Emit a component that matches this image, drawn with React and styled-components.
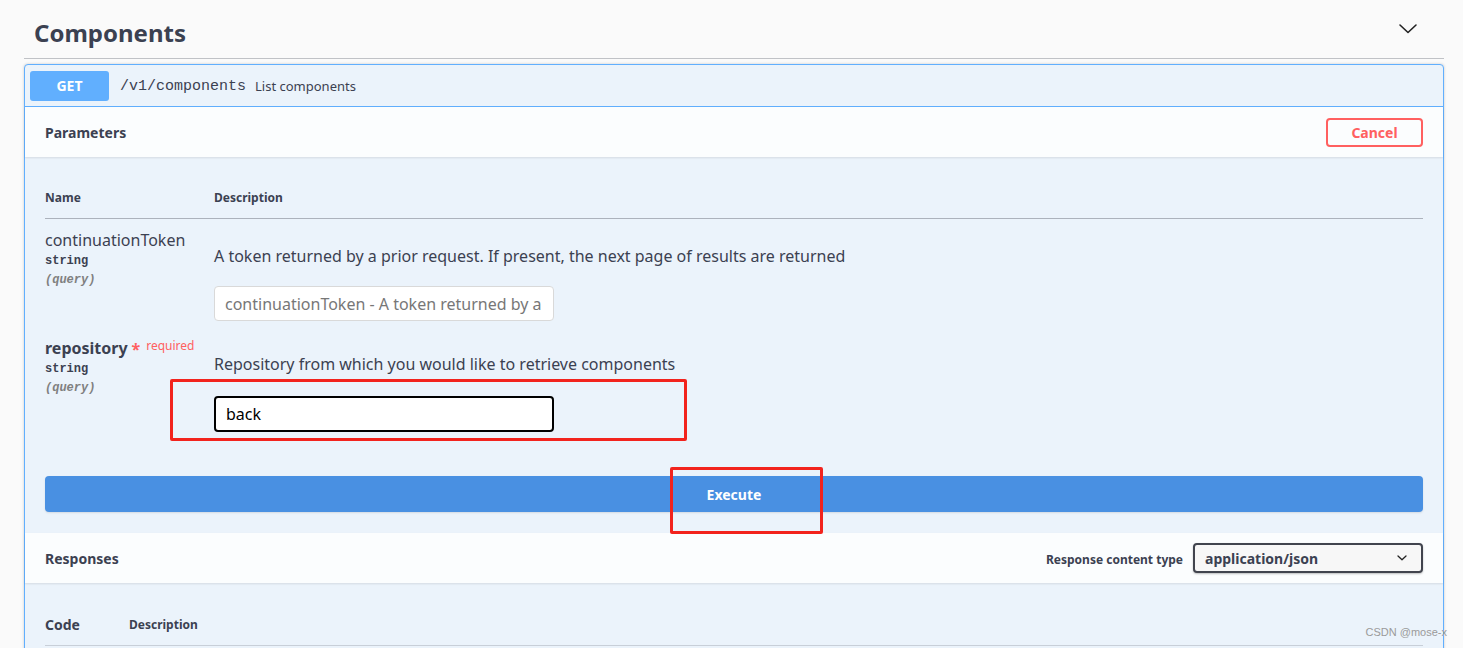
import React from 'react';
import styled, { createGlobalStyle } from 'styled-components';

const GlobalStyle = createGlobalStyle`
  html, body {
    margin: 0;
    padding: 0;
    background: #fafafa;
    font-family: "Noto Sans", "Open Sans", sans-serif;
    color: #3b4151;
    overflow: hidden;
  }
`;

const Page = styled.div`
  position: relative;
  padding: 0 19px 0 24px;
  height: 648px;
`;

const TagHeader = styled.div`
  height: 58px;
  display: flex;
  align-items: center;
  justify-content: space-between;
  padding: 0 26px 0 10px;
  border-bottom: 1px solid rgba(59, 65, 81, 0.3);
`;

const TagTitle = styled.h3`
  margin: 0;
  font-size: 24px;
  font-weight: 700;
  color: #3b4151;
  padding-top: 6px;
`;

const Opblock = styled.div`
  margin-top: 5px;
  border: 1px solid #61affe;
  border-radius: 4px;
  background: #ebf3fb;
  box-shadow: 0 0 3px rgba(0, 0, 0, 0.19);
`;

const Summary = styled.div`
  display: flex;
  align-items: center;
  height: 41px;
  padding: 0 5px;
  border-bottom: 1px solid #61affe;
`;

const Method = styled.span`
  width: 79px;
  height: 30px;
  display: flex;
  align-items: center;
  justify-content: center;
  background: #61affe;
  border-radius: 3px;
  color: #fff;
  font-size: 14px;
  font-weight: 700;
`;

const Path = styled.span`
  font-family: "Liberation Mono", monospace;
  font-size: 15px;
  color: #3b4151;
  margin-left: 11px;
  padding-top: 2px;
`;

const SummaryDesc = styled.span`
  font-size: 13px;
  color: #3b4151;
  margin-left: 9px;
`;

const SectionHeader = styled.div`
  height: 50px;
  display: flex;
  align-items: center;
  justify-content: space-between;
  padding: 0 20px;
  background: rgba(255, 255, 255, 0.8);
  box-shadow: 0 1px 2px rgba(0, 0, 0, 0.1);
`;

const SectionTitle = styled.h4`
  margin: 0;
  font-size: 14px;
  font-weight: 700;
  color: #3b4151;
`;

const CancelButton = styled.button`
  width: 97px;
  height: 29px;
  border: 2px solid #ff6060;
  border-radius: 4px;
  background: transparent;
  color: #ff6060;
  font-family: inherit;
  font-size: 14px;
  font-weight: 700;
`;

const TableWrap = styled.div`
  padding: 20px 20px 0;
`;

const Table = styled.table`
  width: 100%;
  border-collapse: collapse;
`;

const Th = styled.th`
  text-align: left;
  font-size: 12px;
  font-weight: 700;
  color: #3b4151;
  padding: 12px 0;
  height: 16px;
  width: ${(p) => (p.$w ? p.$w + 'px' : 'auto')};
  border-bottom: 1px solid rgba(59, 65, 81, 0.2);
`;

const Td = styled.td`
  vertical-align: top;
  padding: ${(p) => p.$pad || '10px 0 0'};
`;

const ParamName = styled.div`
  font-size: 16px;
  line-height: 22px;
  font-weight: ${(p) => (p.$required ? 700 : 400)};
  color: #3b4151;
  display: flex;
  align-items: flex-start;
`;

const Required = styled.span`
  color: #ff6060;
  font-size: 12px;
  font-weight: 400;
  margin-left: 4px;
  margin-top: -4px;
  span {
    font-size: 16px;
    font-weight: 700;
    position: relative;
    top: 5px;
    margin-right: 6px;
  }
`;

const ParamType = styled.div`
  font-family: "Liberation Mono", monospace;
  font-size: 12px;
  font-weight: 700;
  color: #3b4151;
  margin-top: 1px;
  line-height: 18px;
`;

const ParamIn = styled.div`
  font-family: "Liberation Mono", monospace;
  font-size: 12px;
  font-style: italic;
  font-weight: 600;
  color: #808080;
  line-height: 18px;
  margin-top: 1px;
`;

const Desc = styled.p`
  margin: ${(p) => p.$margin};
  font-size: 16px;
  line-height: 22px;
  color: #3b4151;
`;

const Input = styled.input`
  box-sizing: border-box;
  display: block;
  width: 340px;
  height: ${(p) => (p.$active ? 36 : 35)}px;
  padding: 0 10px;
  border: ${(p) => (p.$active ? '2px solid #000' : '1px solid #d9d9d9')};
  border-radius: 4px;
  background: #fff;
  font-family: inherit;
  font-size: 16px;
  color: #000;
  outline: none;
  &::placeholder {
    color: #777;
  }
`;

const ExecuteWrap = styled.div`
  padding: 34px 20px 21px;
`;

const ExecuteButton = styled.button`
  width: 100%;
  height: 36px;
  border: none;
  border-radius: 4px;
  background: #4990e2;
  color: #fff;
  font-family: inherit;
  font-size: 14px;
  font-weight: 700;
  box-shadow: 0 1px 2px rgba(0, 0, 0, 0.1);
`;

const ContentType = styled.div`
  display: flex;
  align-items: center;
  gap: 10px;
`;

const ContentLabel = styled.span`
  font-size: 12px;
  font-weight: 700;
  color: #3b4151;
  padding-top: 3px;
`;

const Select = styled.div`
  box-sizing: border-box;
  width: 230px;
  height: 30px;
  display: flex;
  align-items: center;
  justify-content: space-between;
  padding: 0 14px 0 10px;
  border: 2px solid #41444e;
  border-radius: 4px;
  background: #f7f7f7;
  box-shadow: 0 1px 2px rgba(0, 0, 0, 0.25);
  font-size: 14px;
  font-weight: 700;
  color: #3b4151;
`;

const ResponsesTable = styled.div`
  display: flex;
  align-items: center;
  margin: 0 20px 20px;
  padding: 32px 0 11px;
  border-bottom: 1px solid rgba(59, 65, 81, 0.2);
`;

const CodeHead = styled.span`
  width: 84px;
  font-size: 14px;
  font-weight: 700;
  color: #3b4151;
`;

const DescHead = styled.span`
  font-size: 12px;
  font-weight: 700;
  color: #3b4151;
`;

const Mark = styled.div`
  position: absolute;
  border: 3px solid #f2231d;
  border-radius: 2px;
  pointer-events: none;
`;

const Watermark = styled.div`
  position: absolute;
  right: 16px;
  top: 626px;
  font-family: "Liberation Sans", sans-serif;
  font-size: 11px;
  color: #9a9a9a;
`;

const Chevron = ({ size = 20, stroke = 2 }) => (
  <svg width={size} height={size} viewBox="0 0 20 20" fill="none">
    <path d="M2 6 L10 13.5 L18 6" stroke="#222" strokeWidth={stroke} strokeLinecap="round" strokeLinejoin="round" />
  </svg>
);

export default function App() {
  return (
    <>
      <GlobalStyle />
      <Page>
        <TagHeader>
          <TagTitle>Components</TagTitle>
          <Chevron size={20} stroke={1.6} />
        </TagHeader>
        <Opblock>
          <Summary>
            <Method>GET</Method>
            <Path>/v1/components</Path>
            <SummaryDesc>List components</SummaryDesc>
          </Summary>
          <SectionHeader>
            <SectionTitle>Parameters</SectionTitle>
            <CancelButton>Cancel</CancelButton>
          </SectionHeader>
          <TableWrap>
            <Table>
              <thead>
                <tr>
                  <Th $w={169}>Name</Th>
                  <Th>Description</Th>
                </tr>
              </thead>
              <tbody>
                <tr>
                  <Td $pad="10px 0 0">
                    <ParamName>continuationToken</ParamName>
                    <ParamType>string</ParamType>
                    <ParamIn>(query)</ParamIn>
                  </Td>
                  <Td $pad="10px 0 0">
                    <Desc $margin="16px 0 19px">A token returned by a prior request. If present, the next page of results are returned</Desc>
                    <Input placeholder="continuationToken - A token returned by a prior request" readOnly />
                  </Td>
                </tr>
                <tr>
                  <Td $pad="16px 0 10px">
                    <ParamName $required>
                      repository
                      <Required><span>*</span>required</Required>
                    </ParamName>
                    <ParamType>string</ParamType>
                    <ParamIn>(query)</ParamIn>
                  </Td>
                  <Td $pad="16px 0 10px">
                    <Desc $margin="16px 0 21px">Repository from which you would like to retrieve components</Desc>
                    <Input $active value="back" readOnly />
                  </Td>
                </tr>
              </tbody>
            </Table>
          </TableWrap>
          <ExecuteWrap>
            <ExecuteButton>Execute</ExecuteButton>
          </ExecuteWrap>
          <SectionHeader>
            <SectionTitle>Responses</SectionTitle>
            <ContentType>
              <ContentLabel>Response content type</ContentLabel>
              <Select>
                application/json
                <Chevron size={10} stroke={2.6} />
              </Select>
            </ContentType>
          </SectionHeader>
          <ResponsesTable>
            <CodeHead>Code</CodeHead>
            <DescHead>Description</DescHead>
          </ResponsesTable>
        </Opblock>
        <Mark style={{ left: 170, top: 379, width: 511, height: 56 }} />
        <Mark style={{ left: 670, top: 467, width: 147, height: 61 }} />
        <Watermark>CSDN @mose-x</Watermark>
      </Page>
    </>
  );
}
